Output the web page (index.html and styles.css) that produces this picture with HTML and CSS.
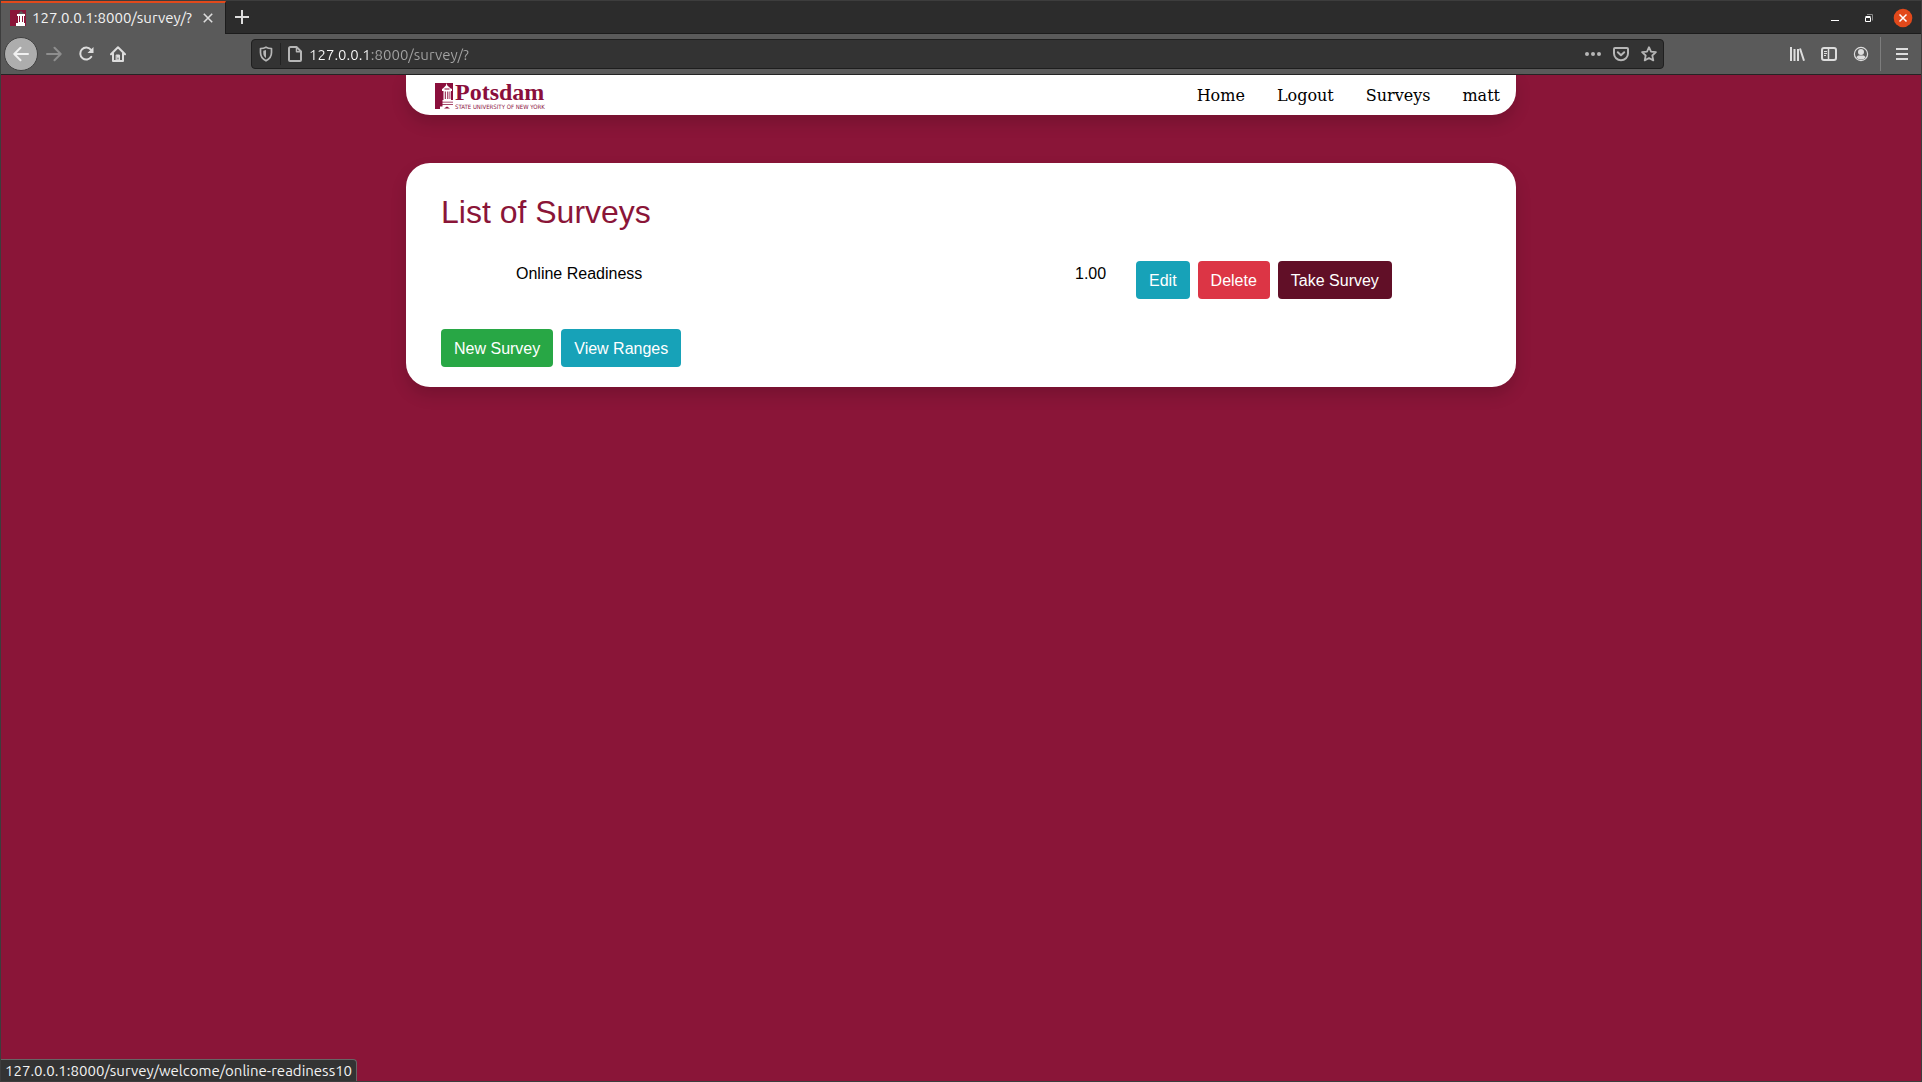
FILE: index.html
```html
<!DOCTYPE html>
<html lang="en">
<head>
<meta charset="utf-8">
<title>List of Surveys</title>
<link rel="stylesheet" href="styles.css">
</head>
<body>
<div class="window">
  <div class="tab-bar">
    <div class="tab">
      <svg class="favicon" width="16" height="16" viewBox="0 0 16 16"><path fill="#8a1538" d="M0 0h16v16H0z"/><path fill="#5a5a5a" d="M9 3l2-2 2 2 2 1H8z"/><path fill="#fff" d="M7 4h8v2h-1v7h1v3H6v-3h2V6H7z"/><path fill="#8a1538" d="M9 6h1v6H9zM12 6h1v6h-1z"/></svg>
      <span class="tab-title">127.0.0.1:8000/survey/?</span>
      <button class="icon-button" aria-label="Close tab"><svg width="10" height="10" viewBox="0 0 10 10" fill="none" stroke="#ddd" stroke-width="1.6"><path d="M.8.8l8.4 8.4M9.2.8L.8 9.2"/></svg></button>
    </div>
    <button class="icon-button new-tab" aria-label="New tab"><svg width="14" height="14" viewBox="0 0 14 14" stroke="#ddd" stroke-width="2"><path d="M7 0v14M0 7h14"/></svg></button>
    <div class="window-controls">
      <button class="icon-button" aria-label="Minimize"><svg width="20" height="20" viewBox="0 0 20 20"><path fill="#fff" d="M6 12h8v1H6z"/></svg></button>
      <button class="icon-button" aria-label="Restore"><svg width="20" height="20" viewBox="0 0 20 20" fill="none"><path stroke="#888" d="M8 6.500h5.500v6"/><path stroke="#fff" d="M6.500 9.500h5v4h-5zM6.500 8.500h5"/></svg></button>
      <button class="icon-button" aria-label="Close window"><svg width="20" height="20" viewBox="0 0 20 20"><circle cx="10" cy="10" r="9.300" fill="#e2491b"/><path d="M6.500 6.500l7 7M13.500 6.500l-7 7" stroke="#fff" stroke-width="1.500"/></svg></button>
    </div>
  </div>

  <div class="toolbar">
    <button class="icon-button back" aria-label="Back"><svg width="16" height="16" viewBox="0 0 16 16" fill="none" stroke="#f0f0f0" stroke-width="2" stroke-linecap="round" stroke-linejoin="round"><path d="M15 8H1.500M7.500 1.800L1.300 8l6.200 6.200"/></svg></button>
    <button class="icon-button" aria-label="Forward"><svg width="16" height="16" viewBox="0 0 16 16" fill="none" stroke="#8e8e8e" stroke-width="2" stroke-linecap="round" stroke-linejoin="round"><path d="M1 8h13.500M8.500 1.800L14.700 8l-6.200 6.200"/></svg></button>
    <button class="icon-button" aria-label="Reload"><svg width="16" height="16" viewBox="0 0 16 16"><path fill="none" stroke="#ddd" stroke-width="2" stroke-linecap="round" d="M12.800 3.600A6 6 0 1 0 13.300 10.800"/><path fill="#ddd" d="M15.500 1v6h-6z"/></svg></button>
    <button class="icon-button" aria-label="Home"><svg width="16" height="16" viewBox="0 0 16 16" fill="none" stroke="#ddd" stroke-width="2" stroke-linecap="round" stroke-linejoin="round"><path d="M1 8.300L8 1.200l7 7.100M3 7.500V15h10V7.500"/><path fill="#ddd" stroke-width="1" d="M6.500 9h3v6h-3z"/><path stroke="#5a5a5a" stroke-width="1" d="M8 12v1"/></svg></button>
    <div class="spring"></div>
    <div class="url-bar">
      <button class="icon-button" aria-label="Tracking protection"><svg width="14" height="16" viewBox="0 0 14 16" fill="none" stroke="#b6b6b6" stroke-width="1.700" stroke-linejoin="round"><path d="M7 1.200C5 2.300 3.300 2.500 1.500 2.500v4C1.500 10.600 3.500 13 7 14.800c3.500-1.800 5.500-4.200 5.500-8.300v-4C10.700 2.500 9 2.300 7 1.200z"/><path fill="#b6b6b6" stroke="none" d="M7 4v8C5 10.800 4.300 9 4.300 7V4.800z"/></svg></button>
      <span class="url-divider"></span>
      <button class="icon-button" aria-label="Site information"><svg width="16" height="16" viewBox="0 0 16 16" fill="none" stroke="#b6b6b6" stroke-width="2" stroke-linejoin="round"><path d="M3.500 1h6L14 5.500V14a1 1 0 0 1-1 1H3a1 1 0 0 1-1-1V2.500A1.500 1.500 0 0 1 3.500 1z"/><path stroke-width="1.500" d="M9.500 1v4.700H14"/></svg></button>
      <input class="url-input" type="text" value="127.0.0.1:8000/survey/?" aria-label="Address">
      <button class="icon-button" aria-label="Page actions"><svg width="16" height="16" viewBox="0 0 16 16" fill="#b6b6b6"><circle cx="2" cy="8" r="2"/><circle cx="8" cy="8" r="2"/><circle cx="14" cy="8" r="2"/></svg></button>
      <button class="icon-button" aria-label="Save to Pocket"><svg width="16" height="16" viewBox="0 0 16 16" fill="none" stroke="#b6b6b6" stroke-width="2" stroke-linecap="round" stroke-linejoin="round"><path d="M2 2h12a1 1 0 0 1 1 1v4.500a7 6.700 0 0 1-14 0V3a1 1 0 0 1 1-1z"/><path d="M4.800 6.300L8 9.300l3.200-3"/></svg></button>
      <button class="icon-button" aria-label="Bookmark"><svg width="16" height="16" viewBox="0 0 16 16" fill="none" stroke="#b6b6b6" stroke-width="1.800" stroke-linejoin="round"><path d="M8 1.200l2 4.400 4.900.6-3.600 3.300 1 4.900L8 12l-4.300 2.400 1-4.900L1.100 6.200 6 5.600z"/></svg></button>
    </div>
    <div class="spring"></div>
    <button class="icon-button" aria-label="Library"><svg width="16" height="16" viewBox="0 0 16 16" fill="none" stroke="#ddd" stroke-width="2"><path d="M2 1v14M5.500 3v12M9 3v12M11 2.500l4 12.200"/></svg></button>
    <button class="icon-button" aria-label="Sidebars"><svg width="16" height="16" viewBox="0 0 16 16" fill="none" stroke="#ddd" stroke-width="2"><rect x="1" y="2" width="14" height="12" rx="2"/><path stroke-width="1.500" d="M7.500 2v12"/><path stroke-width="1" d="M3 5.500h3M3 7.500h3M3 9.500h2"/></svg></button>
    <button class="icon-button" aria-label="Account"><svg width="16" height="16" viewBox="0 0 16 16"><circle cx="8" cy="8" r="6.600" fill="none" stroke="#ddd" stroke-width="1.200"/><circle cx="8" cy="6" r="3" fill="#ddd"/><path fill="#ddd" d="M3.300 11.200c1-1.300 2-1.700 3-1.700h3.400c1 0 2 .4 3 1.700A5.500 5.500 0 0 1 8 13.500a5.500 5.500 0 0 1-4.700-2.300z"/></svg></button>
    <span class="toolbar-divider"></span>
    <button class="icon-button" aria-label="Menu"><svg width="12" height="12" viewBox="0 0 12 12" fill="#ddd"><path d="M0 0h12v2H0zM0 5h12v2H0zM0 10h12v2H0z"/></svg></button>
  </div>

  <div class="page">
    <header class="site-nav">
      <a class="brand" href="#" aria-label="SUNY Potsdam">
        <svg width="120" height="30" viewBox="0 0 120 30">
          <path fill="#8a0f3c" d="M2 3h18v26H2z"/>
          <path fill="#fff" d="M13.500 3l.8 2.500 3.700 3.200h1v2.200h-1V20h2v9H7v-2.500h2.500V20h1v-9H9V8.700h.7l3.200-3.200z"/>
          <path fill="#8a0f3c" d="M11.800 11.500h1V19h-1zM14.300 11.500h1V19h-1zM16.500 11.500h.8V19h-.8zM11.500 8.600h5v.8h-5zM7 21.800h13v.8H7zM7 24.200h13v.7H7zM11 28.500l3-2 3 2z"/>
          <text class="brand-name" x="22" y="20">Potsdam</text>
          <text class="brand-sub" x="22" y="29">STATE UNIVERSITY OF NEW YORK</text>
        </svg>
      </a>
      <nav class="links">
        <a href="#">Home</a>
        <a href="#">Logout</a>
        <a href="#">Surveys</a>
        <a href="#">matt</a>
      </nav>
    </header>

    <main class="card">
      <h1>List of Surveys</h1>
      <table class="surveys">
        <tr>
          <td class="survey-name">Online Readiness</td>
          <td class="survey-version">1.00</td>
          <td>
            <div class="actions">
              <button class="btn info">Edit</button>
              <button class="btn danger">Delete</button>
              <button class="btn maroon">Take Survey</button>
            </div>
          </td>
        </tr>
      </table>
      <div class="actions">
        <button class="btn success">New Survey</button>
        <button class="btn info">View Ranges</button>
      </div>
    </main>
  </div>
  <div class="status">127.0.0.1:8000/survey/welcome/online-readiness10</div>
</div>
</body>
</html>
```
FILE: styles.css
```css
* {
  box-sizing: border-box;
}

body {
  margin: 0;
  font-family: "Liberation Sans", Arial, sans-serif;
  font-size: 16px;
  line-height: 24px;
}

button {
  font: inherit;
  border: 0;
  cursor: pointer;
}

a {
  color: inherit;
  text-decoration: none;
}

svg {
  display: block;
}

.window {
  position: relative;
  display: flex;
  flex-direction: column;
  min-height: 100vh;
  border: 1px solid #3d3d3d;
  background: #8a1538;
}

/* Browser chrome */

.tab-bar {
  display: flex;
  height: 33px;
  background: #2c2c2c;
  box-shadow: inset 0 -1px #1c1c1c;
}

.tab {
  display: flex;
  align-items: center;
  width: 225px;
  padding: 0 7px 2px 9px;
  border-top: 2px solid #e2491b;
  border-right: 1px solid #1c1c1c;
  background: #5a5a5a;
}

.tab-title {
  flex: 1;
  margin-left: 6px;
  color: #f2f2f2;
  font: 15px/20px Ubuntu, "Noto Sans", sans-serif;
}

.icon-button {
  display: flex;
  flex: none;
  align-items: center;
  justify-content: center;
  width: 32px;
  height: 32px;
  padding: 0;
  background: none;
}

.tab .icon-button {
  width: 20px;
}

.window-controls {
  display: flex;
  gap: 2px;
  margin-left: auto;
  padding: 1px 2px 0 0;
}

.toolbar {
  display: flex;
  align-items: center;
  height: 41px;
  padding: 0 3px;
  border-bottom: 1px solid #242424;
  background: #5a5a5a;
}

.toolbar .back {
  width: 34px;
  height: 34px;
  border: 1px solid #404040;
  border-radius: 50%;
  background: #adadad;
}

.spring {
  width: 117px;
}

.toolbar-divider {
  width: 1px;
  height: 34px;
  margin: 0 5px 0 3px;
  background: #7d7d7d;
}

.url-bar {
  display: flex;
  flex: 1;
  align-items: center;
  height: 30px;
  border: 1px solid #1f1f1f;
  border-radius: 4px;
  background: #333;
}

.url-bar .icon-button {
  width: 28px;
  height: 28px;
}

.url-divider {
  width: 1px;
  height: 22px;
  background: #222;
}

.url-input {
  flex: 1;
  min-width: 0;
  height: 28px;
  padding: 0;
  border: 0;
  outline: 0;
  background: linear-gradient(90deg, #fafafa 62px, #a3a3a3 62px);
  background-clip: text;
  color: transparent;
  font: 15px/20px Ubuntu, "Noto Sans", sans-serif;
}

.status {
  position: absolute;
  bottom: 0;
  left: 0;
  padding: 0 4px;
  border-top: 1px solid #666;
  border-right: 1px solid #666;
  border-top-right-radius: 4px;
  background: #333;
  color: #f2f2f2;
  font: 15px/21px Ubuntu, "Noto Sans", sans-serif;
}

/* Site */

.page {
  width: 100%;
  max-width: 1110px;
  margin: 0 auto;
}

.site-nav {
  display: flex;
  align-items: center;
  justify-content: space-between;
  height: 40px;
  padding: 0 16px 0 27px;
  border-radius: 0 0 24px 24px;
  background: #fff;
  box-shadow: 0 8px 16px rgba(0, 0, 0, 0.15);
}

.brand-name {
  fill: #8a0f3c;
  font: bold 24px "Liberation Serif", serif;
}

.brand-sub {
  fill: #8a0f3c;
  font: 6px "DejaVu Sans Condensed", "DejaVu Sans", sans-serif;
}

.links {
  display: flex;
  gap: 32px;
  padding-top: 2px;
  color: #000;
  font-family: "DejaVu Serif", serif;
}

.card {
  margin-top: 48px;
  padding: 29px 35px 20px;
  border-radius: 24px;
  background: #fff;
  box-shadow: 0 8px 16px rgba(0, 0, 0, 0.15);
}

h1 {
  margin: 0 0 29px;
  color: #8a1538;
  font-size: 32px;
  font-weight: 400;
  line-height: 40px;
}

.surveys {
  width: 100%;
  margin-bottom: 30px;
  border-collapse: collapse;
}

.surveys td {
  padding: 0;
  vertical-align: top;
}

.surveys .survey-name {
  width: 634px;
  padding: 1px 0 0 75px;
}

.surveys .survey-version {
  width: 61px;
  padding-top: 1px;
}

.actions {
  display: flex;
  gap: 8px;
}

.btn {
  height: 38px;
  padding: 2px 13px 0;
  border-radius: 4px;
  color: #fff;
}

.info {
  background: #17a2b8;
}

.danger {
  background: #dc3545;
}

.success {
  background: #28a745;
}

.maroon {
  background: #610f27;
}
```
